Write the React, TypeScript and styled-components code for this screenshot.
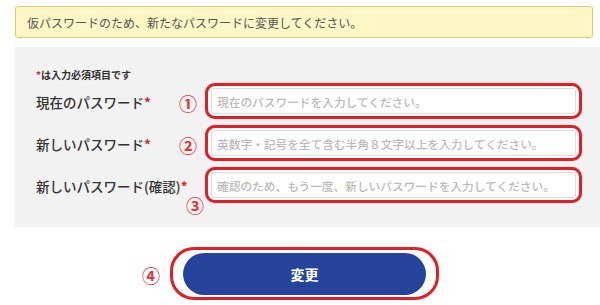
import * as React from "react";
import styled, { createGlobalStyle } from "styled-components";

const GlobalStyle = createGlobalStyle`
  html, body {
    margin: 0;
    padding: 0;
    background: #ffffff;
  }
  body {
    font-family: "Noto Sans CJK JP", "Noto Sans", sans-serif;
    color: #333333;
  }
`;

const Page = styled.div`
  width: 600px;
  height: 305px;
  overflow: hidden;
  padding: 6px 0 0 15px;
  box-sizing: border-box;
`;

const Notice = styled.div`
  width: 578px;
  height: 32px;
  box-sizing: border-box;
  display: flex;
  align-items: center;
  padding-left: 11px;
  background: #fdf7c6;
  border: 1px solid #d9c870;
  border-radius: 3px;
  font-size: 12px;
  color: #555555;
`;

const Panel = styled.div`
  margin-top: 9px;
  width: 585px;
  height: 180px;
  box-sizing: border-box;
  padding: 22px 0 0 21px;
  background: #f2f2f2;
`;

const RequiredNote = styled.div`
  font-size: 10px;
  line-height: 12px;
  font-weight: 700;
  color: #333333;
  margin-bottom: 2px;
`;

const Mark = styled.span`
  color: #d8262e;
  font-weight: 700;
`;

const Rows = styled.div`
  display: flex;
  flex-direction: column;
  gap: 6px;
`;

const Row = styled.div`
  display: grid;
  grid-template-columns: 144px 25px 377px;
  align-items: center;
  height: 36px;
`;

const Label = styled.div`
  font-size: 13.5px;
  font-weight: 500;
  color: #333333;
  white-space: nowrap;
  padding-top: 1px;
`;

const Num = styled.span<{ $drop?: boolean }>`
  font-size: 18px;
  line-height: 18px;
  font-weight: 700;
  color: #e0363c;
  align-self: ${(p) => (p.$drop ? "end" : "center")};
  margin-top: ${(p) => (p.$drop ? "0" : "3px")};
  margin-bottom: ${(p) => (p.$drop ? "-11px" : "0")};
  margin-left: ${(p) => (p.$drop ? "6px" : "-1px")};
`;

const Outline = styled.div`
  height: 36px;
  box-sizing: border-box;
  border: 3px solid #d8232b;
  border-radius: 10px;
  padding: 2px 3px;
  display: flex;
  background: #ffffff;
  box-shadow: 0 0 1px rgba(216, 35, 43, 0.6);
`;

const Field = styled.input`
  flex: 1;
  min-width: 0;
  box-sizing: border-box;
  border: 1px solid #dcdcdc;
  border-radius: 3px;
  padding: 0 5px;
  font-family: "Noto Sans CJK JP", "Noto Sans", sans-serif;
  font-size: 11.7px;
  font-weight: 500;
  color: #333333;
  background: #ffffff;
  outline: none;

  &::placeholder {
    color: #bababa;
  }
`;

const ButtonRow = styled.div`
  display: flex;
  align-items: center;
  gap: 10px;
  margin-top: 20px;
  padding-left: 128px;
`;

const Outer = styled.div`
  box-sizing: border-box;
  width: 269px;
  height: 53px;
  border: 3px solid #d8232b;
  border-radius: 24px;
  padding: 3px 10px 2px 10px;
  display: flex;
  box-shadow: 0 0 1px rgba(216, 35, 43, 0.6);
`;

const SubmitButton = styled.button`
  flex: 1;
  border: none;
  border-radius: 21px;
  background: #23449a;
  color: #ffffff;
  font-family: "Noto Sans CJK JP", "Noto Sans", sans-serif;
  font-size: 14px;
  font-weight: 700;
  cursor: pointer;
`;

const fields = [
  {
    label: "現在のパスワード",
    num: "①",
    placeholder: "現在のパスワードを入力してください。",
  },
  {
    label: "新しいパスワード",
    num: "②",
    placeholder: "英数字・記号を全て含む半角８文字以上を入力してください。",
  },
  {
    label: "新しいパスワード(確認)",
    num: "③",
    placeholder: "確認のため、もう一度、新しいパスワードを入力してください。",
    drop: true,
  },
];

export default function App() {
  return (
    <>
      <GlobalStyle />
      <Page>
        <Notice>仮パスワードのため、新たなパスワードに変更してください。</Notice>
        <Panel>
          <RequiredNote>
            <Mark>*</Mark>は入力必須項目です
          </RequiredNote>
          <Rows>
            {fields.map((f) => (
              <Row key={f.num}>
                <Label>
                  {f.label}
                  <Mark>*</Mark>
                </Label>
                <Num $drop={f.drop}>{f.num}</Num>
                <Outline>
                  <Field type="password" placeholder={f.placeholder} />
                </Outline>
              </Row>
            ))}
          </Rows>
        </Panel>
        <ButtonRow>
          <Num>④</Num>
          <Outer>
            <SubmitButton>変更</SubmitButton>
          </Outer>
        </ButtonRow>
      </Page>
    </>
  );
}
